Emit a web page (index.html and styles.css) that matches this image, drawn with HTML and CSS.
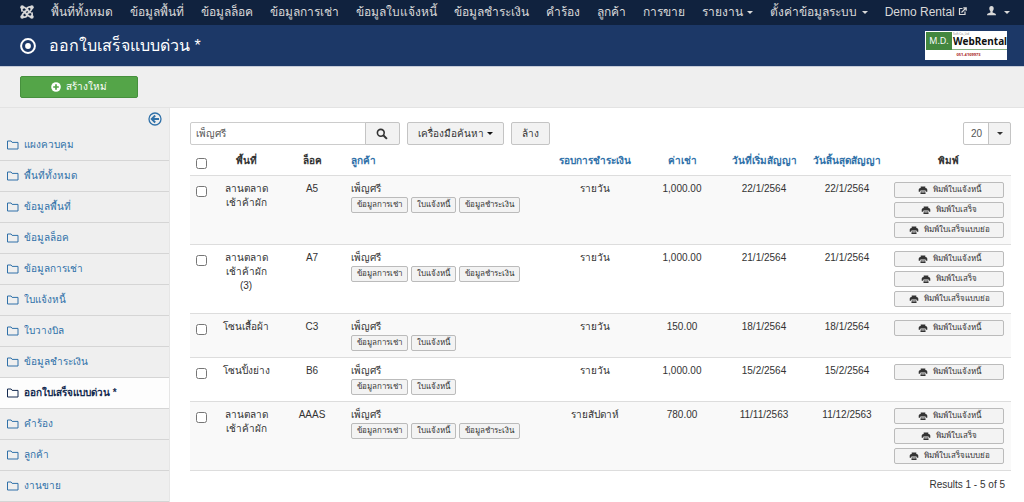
FILE: index.html
```html
<!DOCTYPE html>
<html lang="th">
<head>
<meta charset="utf-8">
<meta name="viewport" content="width=device-width, initial-scale=1">
<title>ออกใบเสร็จแบบด่วน *</title>
<link rel="stylesheet" href="styles.css">
</head>
<body>
<svg class="sprite" aria-hidden="true">
  <symbol id="folder" viewBox="0 0 12 10"><path d="M.5 9V1h3.600l1 1.400h5.900V9z" fill="none" stroke="currentColor"/></symbol>
  <symbol id="print" viewBox="0 0 10 9"><path d="M2.700.5h4.600v1.600H2.700z" fill="currentColor"/><path d="M2.500 2h5C8.900 2 9.300 3 9.300 4v1.700H8L7.500 4.500h-5L2 5.700H.7V4c0-1 .4-2 1.800-2z" fill="currentColor"/><path d="M2.900 5.200h4.200l.5 2.800H2.400z" fill="currentColor"/><path d="M3.300 6h3.400" stroke="#f2f2f2" stroke-width=".8"/></symbol>
</svg>
<nav class="nav">
  <a class="brand" href="#" aria-label="Joomla"><svg viewBox="0 0 14 14"><g fill="none" stroke="currentColor" stroke-width="1.700"><path d="M2.300 6.600C1.700 5 1.700 3.400 2.600 2.600 3.500 1.800 5 2.600 6 3.600l4.600 4.600M6.800 3.200c1.600-1.400 3.700-1.500 4.600-.6.900.9.200 2-.8 3L5.800 10.400M11.700 7.400c.6 1.600.6 3.200-.3 4-.9.800-2.400 0-3.400-1L3.400 5.800M7.200 10.800c-1.600 1.400-3.700 1.500-4.600.6-.9-.9-.2-2 .8-3l4.800-4.800"/></g><g fill="currentColor"><circle cx="2.200" cy="2.200" r="1.900"/><circle cx="11.800" cy="2.200" r="1.900"/><circle cx="2.200" cy="11.800" r="1.900"/><circle cx="11.800" cy="11.800" r="1.900"/></g></svg></a>
  <a href="#">พื้นที่ทั้งหมด</a>
  <a href="#">ข้อมูลพื้นที่</a>
  <a href="#">ข้อมูลล็อค</a>
  <a href="#">ข้อมูลการเช่า</a>
  <a href="#">ข้อมูลใบแจ้งหนี้</a>
  <a href="#">ข้อมูลชำระเงิน</a>
  <a href="#">คำร้อง</a>
  <a href="#">ลูกค้า</a>
  <a href="#">การขาย</a>
  <a href="#">รายงาน <i class="caret"></i></a>
  <a href="#">ตั้งค่าข้อมูลระบบ <i class="caret"></i></a>
  <a class="site" href="#">Demo Rental <svg viewBox="0 0 9 9"><path d="M4.500 1.500h-3v6h5.500v-3M3.500 5.500l4-4M5.300.8h2.900v2.900" fill="none" stroke="currentColor" stroke-width="1.200"/></svg></a>
  <a class="user" href="#" aria-label="User menu"><svg viewBox="0 0 9 10"><path d="M4.500 0C6 0 6.900 1.200 6.700 2.800 6.600 4 6.100 4.600 5.600 5.200v1.400C7.500 7.200 9 7.500 9 9.200H0c0-1.700 1.500-2 3.400-2.600V5.200C2.900 4.600 2.400 4 2.300 2.800 2.100 1.200 3 0 4.500 0z" fill="currentColor"/></svg> <i class="caret"></i></a>
</nav>
<header class="header">
  <svg class="target" viewBox="0 0 16 16"><circle cx="8" cy="8" r="6.900" fill="none" stroke="currentColor" stroke-width="2"/><circle cx="8" cy="8" r="2.900" fill="currentColor"/></svg>
  <h1>ออกใบเสร็จแบบด่วน *</h1>
  <div class="logo">
    <span class="logo-md">M.D.</span>
    <span class="logo-name"><small>Soft Co.,Ltd</small>WebRental</span>
    <span class="logo-phone">051-4109973</span>
  </div>
</header>
<div class="toolbar">
  <button class="new"><svg viewBox="0 0 10 10"><circle cx="5" cy="5" r="4.800" fill="currentColor"/><path d="M5 2.200v5.600M2.200 5h5.600" stroke="#54a548" stroke-width="1.700"/></svg>สร้างใหม่</button>
</div>
<div class="page">
  <aside class="sidebar">
    <button class="collapse" aria-label="Hide sidebar"><svg viewBox="0 0 14 14"><circle cx="7" cy="7" r="6" fill="none" stroke="currentColor" stroke-width="1.300"/><path d="M11 7H4M7.200 3.500L3.700 7l3.500 3.500" fill="none" stroke="currentColor" stroke-width="1.900"/></svg></button>
    <ul>
      <li><a href="#"><svg><use href="#folder"/></svg>แผงควบคุม</a></li>
      <li><a href="#"><svg><use href="#folder"/></svg>พื้นที่ทั้งหมด</a></li>
      <li><a href="#"><svg><use href="#folder"/></svg>ข้อมูลพื้นที่</a></li>
      <li><a href="#"><svg><use href="#folder"/></svg>ข้อมูลล็อค</a></li>
      <li><a href="#"><svg><use href="#folder"/></svg>ข้อมูลการเช่า</a></li>
      <li><a href="#"><svg><use href="#folder"/></svg>ใบแจ้งหนี้</a></li>
      <li><a href="#"><svg><use href="#folder"/></svg>ใบวางบิล</a></li>
      <li><a href="#"><svg><use href="#folder"/></svg>ข้อมูลชำระเงิน</a></li>
      <li class="active"><a href="#"><svg><use href="#folder"/></svg>ออกใบเสร็จแบบด่วน *</a></li>
      <li><a href="#"><svg><use href="#folder"/></svg>คำร้อง</a></li>
      <li><a href="#"><svg><use href="#folder"/></svg>ลูกค้า</a></li>
      <li><a href="#"><svg><use href="#folder"/></svg>งานขาย</a></li>
    </ul>
  </aside>
  <main class="main">
    <form class="filters">
      <div class="search">
        <input type="text" value="เพ็ญศรี" aria-label="ค้นหา">
        <button type="button" class="btn" aria-label="ค้นหา"><svg viewBox="0 0 12 12"><circle cx="4.800" cy="4.800" r="3.400" fill="none" stroke="currentColor" stroke-width="1.600"/><path d="M7.300 7.300l3.600 3.600" stroke="currentColor" stroke-width="2"/></svg></button>
      </div>
      <button type="button" class="btn tools">เครื่องมือค้นหา <i class="caret"></i></button>
      <button type="button" class="btn">ล้าง</button>
      <div class="limit"><select aria-label="จำนวนรายการ"><option>20</option></select><i class="caret"></i></div>
    </form>
    <table>
      <colgroup><col class="c-check"><col class="c-area"><col class="c-lot"><col class="c-cust"><col class="c-round"><col class="c-rent"><col class="c-start"><col class="c-end"><col class="c-print"></colgroup>
      <thead>
        <tr><th><input type="checkbox" aria-label="เลือกทั้งหมด"></th><th>พื้นที่</th><th>ล็อค</th><th class="left"><a href="#">ลูกค้า</a></th><th><a href="#">รอบการชำระเงิน</a></th><th><a href="#">ค่าเช่า</a></th><th><a href="#">วันที่เริ่มสัญญา</a></th><th><a href="#">วันสิ้นสุดสัญญา</a></th><th>พิมพ์</th></tr>
      </thead>
      <tbody>
        <tr><td><input type="checkbox" aria-label="A5"></td><td>ลานตลาด<br>เช้าค้าผัก</td><td>A5</td>
          <td class="left">เพ็ญศรี<div class="links"><button class="mini">ข้อมูลการเช่า</button><button class="mini">ใบแจ้งหนี้</button><button class="mini">ข้อมูลชำระเงิน</button></div></td>
          <td>รายวัน</td><td>1,000.00</td><td>22/1/2564</td><td>22/1/2564</td>
          <td><div class="prints"><button class="mini"><svg><use href="#print"/></svg>พิมพ์ใบแจ้งหนี้</button><button class="mini"><svg><use href="#print"/></svg>พิมพ์ใบเสร็จ</button><button class="mini"><svg><use href="#print"/></svg>พิมพ์ใบเสร็จแบบย่อ</button></div></td></tr>
        <tr><td><input type="checkbox" aria-label="A7"></td><td>ลานตลาด<br>เช้าค้าผัก<br>(3)</td><td>A7</td>
          <td class="left">เพ็ญศรี<div class="links"><button class="mini">ข้อมูลการเช่า</button><button class="mini">ใบแจ้งหนี้</button><button class="mini">ข้อมูลชำระเงิน</button></div></td>
          <td>รายวัน</td><td>1,000.00</td><td>21/1/2564</td><td>21/1/2564</td>
          <td><div class="prints"><button class="mini"><svg><use href="#print"/></svg>พิมพ์ใบแจ้งหนี้</button><button class="mini"><svg><use href="#print"/></svg>พิมพ์ใบเสร็จ</button><button class="mini"><svg><use href="#print"/></svg>พิมพ์ใบเสร็จแบบย่อ</button></div></td></tr>
        <tr><td><input type="checkbox" aria-label="C3"></td><td>โซนเสื้อผ้า</td><td>C3</td>
          <td class="left">เพ็ญศรี<div class="links"><button class="mini">ข้อมูลการเช่า</button><button class="mini">ใบแจ้งหนี้</button></div></td>
          <td>รายวัน</td><td>150.00</td><td>18/1/2564</td><td>18/1/2564</td>
          <td><div class="prints"><button class="mini"><svg><use href="#print"/></svg>พิมพ์ใบแจ้งหนี้</button></div></td></tr>
        <tr><td><input type="checkbox" aria-label="B6"></td><td>โซนปิ้งย่าง</td><td>B6</td>
          <td class="left">เพ็ญศรี<div class="links"><button class="mini">ข้อมูลการเช่า</button><button class="mini">ใบแจ้งหนี้</button></div></td>
          <td>รายวัน</td><td>1,000.00</td><td>15/2/2564</td><td>15/2/2564</td>
          <td><div class="prints"><button class="mini"><svg><use href="#print"/></svg>พิมพ์ใบแจ้งหนี้</button></div></td></tr>
        <tr><td><input type="checkbox" aria-label="AAAS"></td><td>ลานตลาด<br>เช้าค้าผัก</td><td>AAAS</td>
          <td class="left">เพ็ญศรี<div class="links"><button class="mini">ข้อมูลการเช่า</button><button class="mini">ใบแจ้งหนี้</button><button class="mini">ข้อมูลชำระเงิน</button></div></td>
          <td>รายสัปดาห์</td><td>780.00</td><td>11/11/2563</td><td>11/12/2563</td>
          <td><div class="prints"><button class="mini"><svg><use href="#print"/></svg>พิมพ์ใบแจ้งหนี้</button><button class="mini"><svg><use href="#print"/></svg>พิมพ์ใบเสร็จ</button><button class="mini"><svg><use href="#print"/></svg>พิมพ์ใบเสร็จแบบย่อ</button></div></td></tr>
      </tbody>
    </table>
    <p class="results">Results 1 - 5 of 5</p>
  </main>
</div>
</body>
</html>
```
FILE: styles.css
```css
* { box-sizing: border-box; }
html { overflow: hidden; }
body {
  margin: 0;
  min-height: 100vh;
  display: flex;
  flex-direction: column;
  background: #fff;
  color: #333;
  font: 10px/14px "Liberation Sans", sans-serif;
}
.sprite { display: none; }
a { color: #3071a9; text-decoration: none; }
button, input, select { font: inherit; color: inherit; margin: 0; }
.caret {
  display: inline-block;
  border: 3px solid transparent;
  border-top-color: currentColor;
  border-bottom-width: 0;
  vertical-align: middle;
}

.nav {
  display: flex;
  align-items: center;
  gap: 17px;
  height: 25px;
  padding: 0 15px 1px 20px;
  background: #10223e;
  font-size: 12px;
  line-height: 24px;
  white-space: nowrap;
}
.nav a { color: #d9d9d9; }
.nav .caret { margin-left: 1px; }
.brand svg { display: block; width: 14px; height: 14px; }
.site { margin-left: auto; }
.site svg { width: 9px; height: 9px; }
.user { margin-left: 3px; }
.user svg { width: 9px; height: 10px; margin-right: 4px; }

.header {
  display: flex;
  align-items: center;
  height: 41px;
  padding: 0 17px 0 20px;
  background: #1c3867;
  color: #fff;
}
.target { width: 16px; height: 16px; margin-right: 13px; }
h1 { margin: 0; font-size: 16px; font-weight: 400; line-height: 24px; }
.logo {
  display: grid;
  grid-template-columns: 26px 1fr;
  grid-template-rows: 19px 9px;
  width: 82px;
  margin-left: auto;
  padding: 0 0 1px 1px;
  background: #fff;
  font-family: "Open Sans", sans-serif;
}
.logo-md {
  border-top: 1px solid #fff;
  background: #43873f;
  font-size: 9px;
  line-height: 18px;
  text-align: center;
}
.logo-name {
  display: flex;
  flex-direction: column;
  padding: 2px 0 0 1px;
  border-bottom: 1px solid #83b080;
  color: #111;
  font-family: "Noto Sans", sans-serif;
  font-size: 10px;
  font-weight: 700;
  line-height: 11px;
}
.logo-name small { color: #888; font-size: 3px; font-weight: 400; line-height: 3px; }
.logo-phone {
  grid-column: 1 / 3;
  padding-left: 4px;
  color: #a22;
  font-size: 4px;
  font-weight: 700;
  line-height: 9px;
  text-align: center;
}

.toolbar {
  height: 41px;
  padding: 9px 20px;
  border-top: 1px solid #c5cbd8;
  background: #efefef;
}
.new {
  display: flex;
  align-items: center;
  justify-content: center;
  gap: 5px;
  width: 118px;
  height: 22px;
  border: 1px solid #46903d;
  border-radius: 2px;
  background: #54a548;
  color: #fff;
}
.new svg { width: 10px; height: 10px; }

.page { display: flex; flex: 1; border-top: 1px solid #e3e3e3; }
.sidebar {
  flex: 0 0 170px;
  border-right: 1px solid #e6e6e6;
  background: #efefef;
}
.collapse {
  display: flex;
  margin: 4px 7px 4px auto;
  padding: 0;
  border: 0;
  background: none;
  color: #3071a9;
}
.collapse svg { width: 14px; height: 14px; }
.sidebar ul { margin: 0; padding: 0; list-style: none; }
.sidebar li { border-bottom: 1px solid #d5d5d5; }
.sidebar a {
  display: flex;
  align-items: center;
  gap: 5px;
  height: 30px;
  padding-left: 7px;
}
.sidebar a svg { width: 12px; height: 10px; }
.sidebar .active { background: #fdfdfd; }
.sidebar .active a { color: #152b50; font-weight: 700; }

.main { flex: 1; min-width: 0; padding: 14px 13px 0 20px; }
.filters { display: flex; gap: 7px; height: 23px; }
.btn {
  padding: 0 10px;
  border: 1px solid #c4c4c4;
  border-radius: 2px;
  background: #f2f2f2;
}
.btn .caret { color: #111; }
.search { display: flex; }
.search input {
  width: 176px;
  padding: 0 5px;
  border: 1px solid #ccc;
  border-radius: 2px 0 0 2px;
  color: #555;
}
.search .btn { width: 35px; margin-left: -1px; border-radius: 0 2px 2px 0; }
.search svg { display: block; width: 12px; height: 12px; }
.limit {
  position: relative;
  display: flex;
  width: 48px;
  margin-left: auto;
}
.limit select {
  width: 100%;
  padding: 0 7px;
  appearance: none;
  border: 1px solid #c4c4c4;
  border-radius: 2px;
  background: linear-gradient(90deg, #fff 24px, #c4c4c4 24px, #c4c4c4 25px, #f2f2f2 25px);
  color: #555;
}
.limit .caret { position: absolute; top: 10px; right: 8px; pointer-events: none; }

table { width: 100%; table-layout: fixed; border-collapse: collapse; }
.c-check { width: 24px; }
.c-area { width: 64px; }
.c-lot { width: 68px; }
.c-round { width: 98px; }
.c-rent { width: 76px; }
.c-start { width: 88px; }
.c-end { width: 78px; }
.c-print { width: 125px; }
th, td { padding: 6px 0; vertical-align: top; text-align: center; }
th { height: 30px; padding-top: 9px; white-space: nowrap; }
td { border-top: 1px solid #ddd; }
tbody { border-bottom: 1px solid #ddd; }
tbody tr:nth-child(odd) { background: #f9f9f9; }
th.left, td.left { padding-left: 5px; text-align: left; }
input[type="checkbox"] { display: block; width: 11px; height: 11px; margin: 4px 6px 0; }
.links { display: flex; gap: 3px; margin-top: 1px; }
.mini {
  height: 16px;
  padding: 0 5px;
  border: 1px solid #bbb;
  border-radius: 2px;
  background: #f3f3f3;
  font-size: 8px;
  line-height: 12px;
  white-space: nowrap;
}
.prints { display: flex; flex-direction: column; gap: 4px; padding: 0 7px 0 8px; }
.prints .mini { display: flex; align-items: center; justify-content: center; gap: 5px; }
.prints svg { width: 10px; height: 9px; }
.results { margin: 7px 6px 0; text-align: right; }
```
